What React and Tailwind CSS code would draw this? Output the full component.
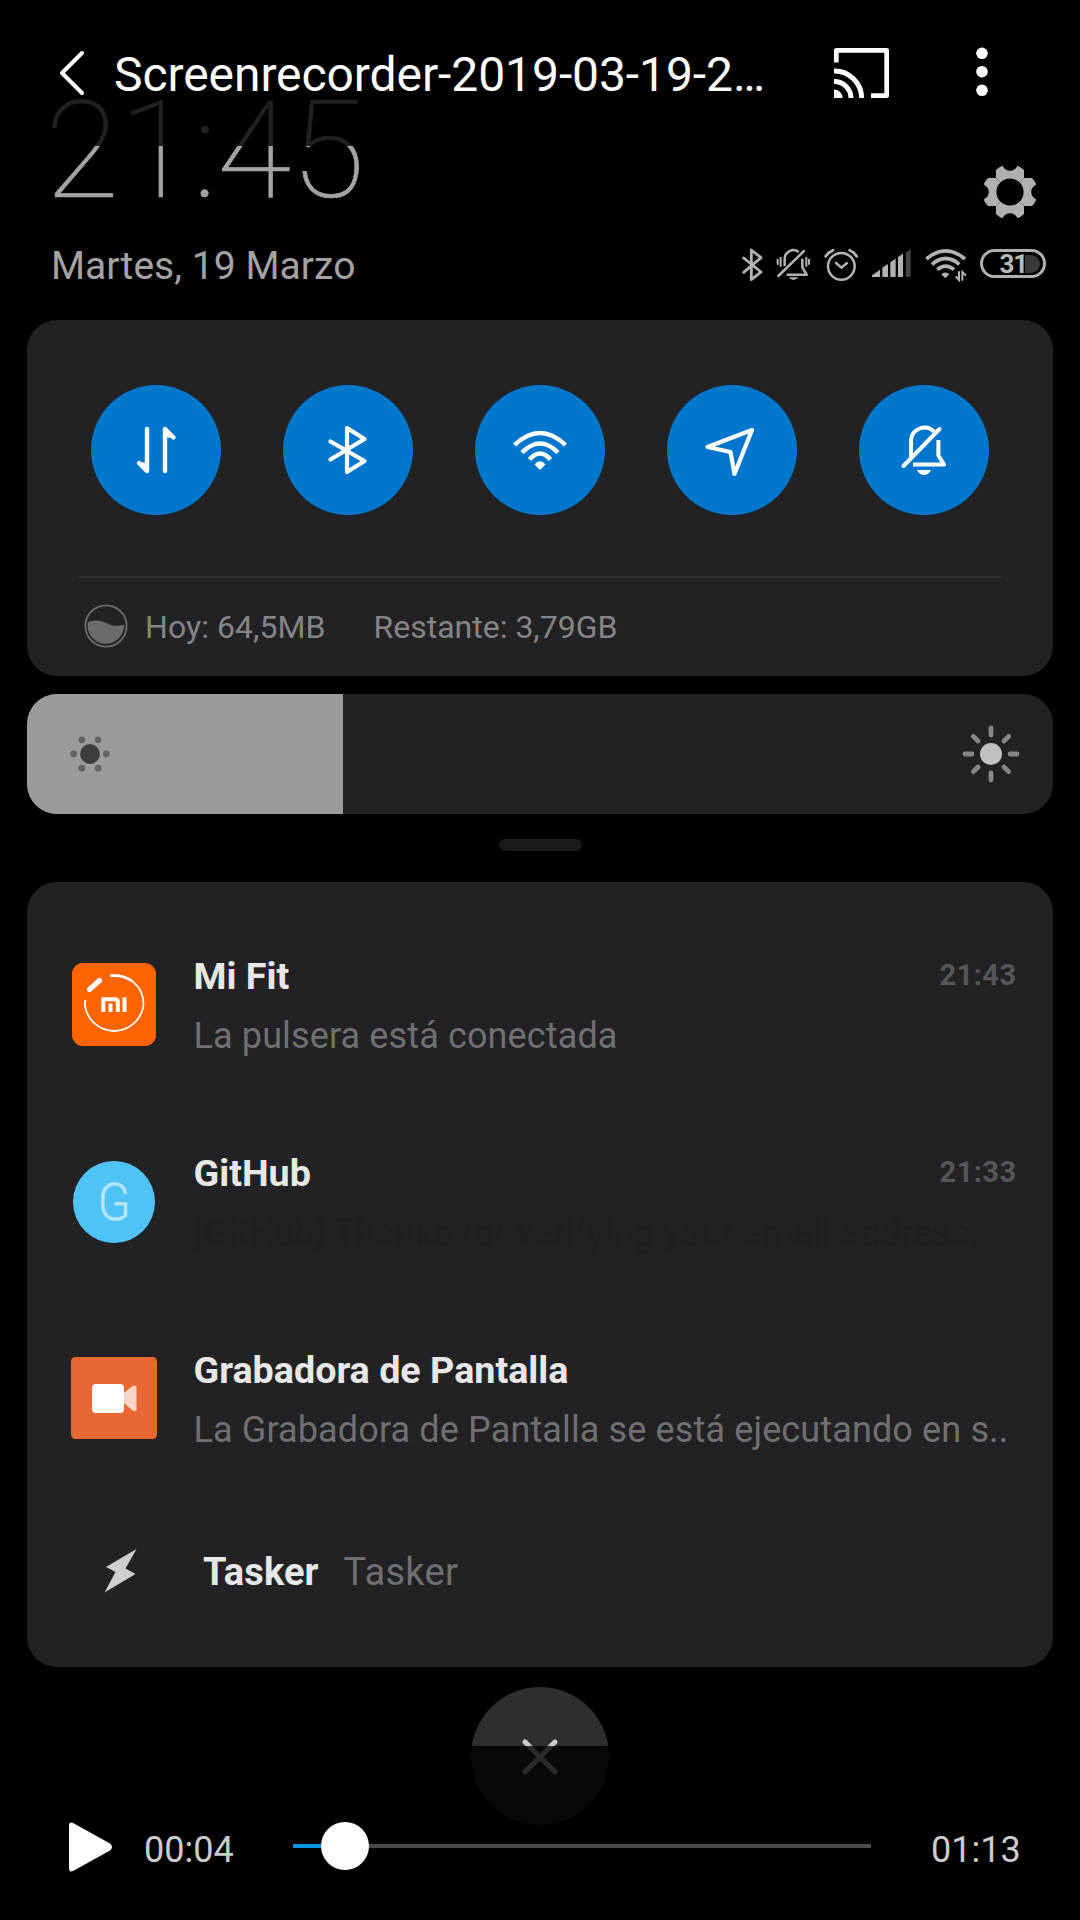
import React from "react";

/* ---------- Player header ---------- */

function PlayerHeader() {
  return (
    <header className="absolute inset-x-0 top-0 z-10 flex h-[146px] items-start bg-black/80 pl-[56px] text-white">
      <svg className="mt-[48px] h-[50px] w-[32px]" viewBox="0 0 32 50" fill="none" stroke="currentColor" strokeWidth="4" strokeLinecap="round" strokeLinejoin="round">
        <path d="M26 5 L6 25 L26 45" />
      </svg>
      <h1 className="ml-[26px] mt-[50px] h-[48px] w-[720px] whitespace-nowrap text-[48px] leading-[50px] tracking-[-0.08px]">
        Screenrecorder-2019-03-19-2…
      </h1>
      <svg className="mt-[48px] h-[50px] w-[55px] shrink-0" viewBox="0 0 55 50">
        <path d="M2.3 14.5 V2.4 H52.7 V47.6 H37" fill="none" stroke="currentColor" strokeWidth="4.7" strokeLinejoin="round" />
        <path d="M0 23 A27.3 27.3 0 0 1 27.7 50 M0 33.4 A16.8 16.8 0 0 1 17 50" fill="none" stroke="currentColor" strokeWidth="5" />
        <path d="M0 41.5 A8.7 8.7 0 0 1 8.7 50 H0 Z" fill="currentColor" />
      </svg>
      <svg className="ml-[86px] mt-[46px] h-[52px] w-[14px] shrink-0" viewBox="0 0 14 52" fill="currentColor">
        <circle cx="7" cy="7.3" r="5.8" />
        <circle cx="7" cy="25.7" r="5.8" />
        <circle cx="7" cy="44.3" r="5.8" />
      </svg>
    </header>
  );
}

/* ---------- Status area ---------- */

function Gear() {
  const side = "M-14 -14 V-22 Q-11 -25 -7.5 -26.3 Q-5 -21.2 0 -21.2 Q5 -21.2 7.5 -26.3 Q11 -25 14 -22 V-14";
  return (
    <svg className="h-[54px] w-[54px]" viewBox="-27 -27 54 54" fill="#b0b0b0">
      {[0, 90, 180, 270].map((a) => (
        <path key={a} transform={`rotate(${a})`} d={side + " L9.6 -9.6 A13.5 13.5 0 0 0 -9.6 -9.6 Z"} />
      ))}
    </svg>
  );
}

function StatusIcons() {
  return (
    <div className="flex h-[35px] items-start text-[#b3b3b3]">
      <svg className="h-[35px] w-[25px]" viewBox="60 51 75 105" fill="none" stroke="currentColor" strokeWidth="8.5" strokeLinejoin="round" strokeLinecap="round">
        <path d="M71 84 L123 126 L94 149 V60 L123 83 L71 127" />
      </svg>
      <svg className="ml-[10px] h-[35px] w-[37px]" viewBox="165 51 111 105" fill="none" stroke="currentColor" strokeWidth="7.5">
        <path d="M194 108 V86 A26 26 0 0 1 236 66 M247 86 V112 L260 134 H200" strokeLinejoin="round" />
        <path d="M175 138 L252 63" strokeLinecap="round" />
        <path d="M173 87 V104 M182 81 V110 M259 81 V110 M267 87 V104" strokeWidth="6" />
        <path d="M206 142 H235 Q229 150 220.5 150 Q212 150 206 142 Z" fill="currentColor" stroke="none" />
      </svg>
      <svg className="ml-[11px] h-[35px] w-[36px]" viewBox="309 51 108 105" fill="none" stroke="currentColor" strokeWidth="7.5" strokeLinecap="round">
        <circle cx="364" cy="109" r="40" />
        <path d="M348 99 L364 113 L381 99" strokeLinejoin="round" />
        <path d="M317 79 Q325 67 339 61 M389 61 Q402 67 410 79" strokeWidth="8.5" />
      </svg>
      <svg className="ml-[11px] h-[35px] w-[43px]" viewBox="450 51 129 105" fill="currentColor">
        <path d="M456 141 V136 L480 119 V141 Z M487 141 V113 L504 102 V141 Z M511 141 V97 L527 86 V141 Z M534 141 V81 L549 71 V141 Z" />
        <path d="M558 141 V67 L572 58 V141 Z" fill="#444444" />
      </svg>
      <svg className="ml-[10px] h-[35px] w-[45px]" viewBox="609 51 135 105" fill="none" stroke="currentColor" strokeWidth="11">
        <path d="M619 87 Q677 38 735 87 M636 103 Q677 68 718 103 M652 119 Q677 98 702 119" />
        <path d="M664 133 Q676 122 688 133 L676 145 Z" fill="currentColor" stroke="none" />
        <path d="M717 124 V150 L707 139 M727 152 V126 L738 137" strokeWidth="6" />
      </svg>
      <div className="ml-[12px] mt-[2px] flex h-[29px] w-[66px] items-center rounded-full border-[3px] border-[#b0b0b0] pl-[16.5px]">
        <span className="w-[25px] text-[26px] font-bold leading-[26px] tracking-[-1.2px] text-[#b8b8b8]">31</span>
        <span className="h-[18px] w-[15px] rounded-r-full bg-[#383838]" />
      </div>
    </div>
  );
}

function ShadeHeader() {
  return (
    <section className="flex h-[320px] justify-between pl-[51px] pr-[34px] text-[#a3a3a3]">
      <div className="pt-[98px]">
        <div className="-ml-[6px] h-[106px] text-[135.5px] font-thin leading-[106px] tracking-[-0.2px] [-webkit-text-stroke:0.7px_#a3a3a3]">21:45</div>
        <div className="mt-[43px] text-[39px] leading-[38px] tracking-[0.05px]">Martes, 19 Marzo</div>
      </div>
      <div className="flex flex-col items-end pt-[165px]">
        <div className="pr-[9px]">
          <Gear />
        </div>
        <div className="mt-[28px]">
          <StatusIcons />
        </div>
      </div>
    </section>
  );
}

/* ---------- Quick toggles ---------- */

const toggleIcons = [
  <g key="data" strokeWidth="4.4">
    <path d="M56 44 V86 L48 78" />
    <path d="M74 86 V44 L82.5 52.5" />
    <path d="M49 78 L56 79 V85 Z M81 52 L74 51 V45 Z" fill="currentColor" strokeWidth="2" />
  </g>,
  <path key="bluetooth" d="M47.5 56.5 L81.5 76 L64 87 V43 L81.5 54 L47.5 74.5" />,
  <g key="wifi" strokeLinecap="butt">
    <path d="M39.5 60 Q65 36 90.5 60 M47 67.5 Q65 49.5 83 67.5 M54.5 74.5 Q65 62.5 75.5 74.5" strokeWidth="4.4" />
    <path d="M59.5 79.5 Q65 73 70.5 79.5 L65 85 Z" fill="currentColor" stroke="none" />
  </g>,
  <path key="location" d="M85 45 L40.5 62 L63.5 67 L67.5 89 Z" />,
  <g key="mute" strokeWidth="4">
    <path d="M52 73 V55.5 A13.5 13.5 0 0 1 75 46.5 M79.4 55 V70.5 L85 79.5 H54" strokeLinecap="butt" />
    <path d="M44.5 81 L80.5 44" />
    <path d="M58 85 H72 Q69.5 90 65 90 Q60.5 90 58 85 Z" fill="currentColor" stroke="none" />
  </g>,
];

function QuickPanel() {
  return (
    <section className="h-[356px] rounded-[30px] bg-[#222224] px-[52px] pt-[65px]">
      <div className="flex justify-between pl-[12px] pr-[12px]">
        {toggleIcons.map((icon, i) => (
          <div key={i} className="h-[130px] w-[130px] shrink-0 rounded-full bg-[#0077cd] text-white">
            <svg viewBox="0 0 130 130" fill="none" stroke="currentColor" strokeWidth="4.2" strokeLinecap="round" strokeLinejoin="round">
              {icon}
            </svg>
          </div>
        ))}
      </div>
      <div className="mt-[61px] h-[2px] bg-[#303032]" />
      <div className="mt-[26px] flex items-start text-[32px] leading-[46px] text-[#858587]">
        <svg className="ml-[5px] h-[44px] w-[44px]" viewBox="0 0 44 44">
          <circle cx="22" cy="22" r="20.6" fill="none" stroke="#6e6e6e" strokeWidth="1.8" />
          <path d="M4 18 C10 15.5 16 16 22 18.8 C28 22 34 22.5 40 20.5 A18.2 18.2 0 1 1 4 18 Z" fill="#6b6b6b" />
        </svg>
        <span className="ml-[17px] w-[228.5px] tracking-[0.06px]">Hoy: 64,5MB</span>
        <span>Restante: 3,79GB</span>
      </div>
    </section>
  );
}

/* ---------- Brightness ---------- */

function Brightness() {
  return (
    <section className="mt-[18px] flex h-[120px] items-center justify-between overflow-hidden rounded-[30px] bg-[#222224]">
      <div className="flex h-full w-[315.5px] items-center bg-[#9b9b9b] pl-[42px]">
        <svg className="h-[40px] w-[42px]" viewBox="-21 -20 42 40" fill="#646464">
          <circle r="9.9" fill="#3d3d3d" />
          <circle cx="-16.4" r="3.4" />
          <circle cx="16.4" r="3.4" />
          <circle cx="-8.2" cy="-14.2" r="3.4" />
          <circle cx="8.2" cy="-14.2" r="3.4" />
          <circle cx="-8.2" cy="14.2" r="3.4" />
          <circle cx="8.2" cy="14.2" r="3.4" />
        </svg>
      </div>
      <svg className="mr-[32.5px] h-[60px] w-[60px]" viewBox="-30 -30 60 60">
        <circle r="11" fill="#c0c0c0" />
        {[0, 45, 90, 135, 180, 225, 270, 315].map((a) => (
          <path key={a} d={a % 90 ? "M0 -18.3 V-25" : "M0 -19 V-26"} transform={`rotate(${a})`} stroke="#868688" strokeWidth="4.8" strokeLinecap="round" />
        ))}
      </svg>
    </section>
  );
}

/* ---------- Notifications ---------- */

function MiFitIcon() {
  return (
    <svg className="h-[84px] w-[84px]" viewBox="0 0 84 84" fill="none" stroke="#ffffff">
      <rect width="84" height="83" rx="11" fill="#ff6400" stroke="none" />
      <path d="M39 12.6 C57 10.5 71.5 24 71.5 41 A29.4 29.4 0 0 1 12.9 41 L13.3 37" strokeWidth="1.8" />
      <path d="M38 12.8 Q51 11.5 60 18" strokeWidth="2.6" />
      <path d="M17.5 26.5 L27.5 17.5" strokeWidth="5.2" strokeLinecap="round" />
      <path d="M31.3 49 V36.3 H43 Q45.8 36.3 45.8 39 V49 M38.5 40.5 V49 M52.5 34.3 V49" strokeWidth="4" />
    </svg>
  );
}

function GitHubIcon() {
  return (
    <div className="flex h-[82px] w-[82px] items-center justify-center rounded-full bg-[#4fc3f7] text-[51px] leading-none text-[#b9e7fc]">
      <span className="scale-x-95 pt-[2px] font-light [-webkit-text-stroke:0.5px_#b9e7fc]">G</span>
    </div>
  );
}

function RecorderIcon() {
  return (
    <svg className="-mt-[1px] h-[82px] w-[86px]" viewBox="0 0 86 82">
      <rect width="86" height="82" rx="4.5" fill="#e86835" />
      <rect x="21" y="27" width="32" height="29" rx="4" fill="#ffffff" />
      <path d="M53 36 L61 29.5 Q65.5 27 65.5 31 V52 Q65.5 56 61 53 L53 46 Z" fill="#f8d5c8" />
    </svg>
  );
}

function Notification({ icon, title, text, time, textClass = "text-[#707072] tracking-[0.13px]" }) {
  return (
    <article className="flex h-[197px]">
      <div className="ml-[44px] flex w-[86px] shrink-0 items-center justify-center">{icon}</div>
      <div className="ml-[36.5px] flex-1 pt-[48px]">
        <div className="flex justify-between pr-[36.5px]">
          <h2 className="text-[37.7px] font-bold leading-[44px] text-[#e8e8e8]">{title}</h2>
          <time className="pt-[2px] text-[29px] font-bold leading-[38px] tracking-[0.45px] text-[#565658]">{time}</time>
        </div>
        <p className={"mt-[15.5px] whitespace-nowrap text-[36px] leading-[44px] " + textClass}>{text}</p>
      </div>
    </article>
  );
}

function Notifications() {
  return (
    <section className="mt-[31px] h-[785px] rounded-[30px] bg-[#222224] pt-[24px]">
      <Notification icon={<MiFitIcon />} title="Mi Fit" text="La pulsera está conectada" time="21:43" />
      <Notification
        icon={<GitHubIcon />}
        title="GitHub"
        text="[GitHub] Thanks for verifying your email address."
        time="21:33"
        textClass="text-[#202020] tracking-[0.2px]"
      />
      <Notification icon={<RecorderIcon />} title="Grabadora de Pantalla" text="La Grabadora de Pantalla se está ejecutando en s.." />
      <div className="flex items-start pt-[52px]">
        <svg className="ml-[77px] h-[44px] w-[34px]" viewBox="0 0 34 44" fill="#cfcfcf">
          <path d="M32.5 0 L2 18 L11.5 23 L0.5 43.5 L31.5 25 L21.5 19.5 Z" />
        </svg>
        <p className="ml-[65px] pt-[1px] text-[38px] leading-[44px] text-[#e8e8e8]">
          <span className="font-bold tracking-[0.1px]">Tasker</span>
          <span className="ml-[25px] tracking-[0.3px] text-[#707072]">Tasker</span>
        </p>
      </div>
    </section>
  );
}

/* ---------- Player controls ---------- */

function PlayerControls() {
  return (
    <footer className="absolute inset-x-0 bottom-0 z-10 flex h-[174px] items-start bg-black/80 text-[36px] leading-[44px] text-[#cccccc]">
      <svg className="ml-[69px] mt-[76px] h-[50px] w-[44px]" viewBox="0 0 44 50" fill="#ffffff">
        <path d="M0 4 Q0 -1 4.5 1.2 L41 21.5 Q45 25 41 28.5 L4.5 48.7 Q0 51 0 46 Z" />
      </svg>
      <span className="ml-[31px] mt-[82px] w-[149px]">00:04</span>
      <div className="mt-[76px] flex h-[48px] w-[578px] items-center">
        <div className="h-[4px] w-[28px] bg-[#0091df]" />
        <div className="h-[48px] w-[48px] rounded-full bg-white" />
        <div className="h-[4px] flex-1 bg-[#4c4c4c]" />
      </div>
      <span className="ml-[60px] mt-[82px]">01:13</span>
    </footer>
  );
}

export default function App() {
  return (
    <main className="relative h-[1920px] w-[1080px] overflow-hidden bg-black font-['Roboto',sans-serif]">
      <ShadeHeader />
      <div className="px-[27px]">
        <QuickPanel />
        <Brightness />
        <div className="mx-auto mt-[25px] h-[12px] w-[83px] rounded-full bg-[#191919]" />
        <Notifications />
        <div className="mx-auto mt-[20px] flex h-[138px] w-[138px] items-center justify-center rounded-full bg-[#2e2e2e]">
          <svg className="mt-[1px] h-[38px] w-[38px]" viewBox="0 0 38 38" stroke="#cccccc" strokeWidth="5.2" strokeLinecap="round">
            <path d="M4 4 L34 34 M34 4 L4 34" />
          </svg>
        </div>
      </div>
      <PlayerHeader />
      <PlayerControls />
    </main>
  );
}
